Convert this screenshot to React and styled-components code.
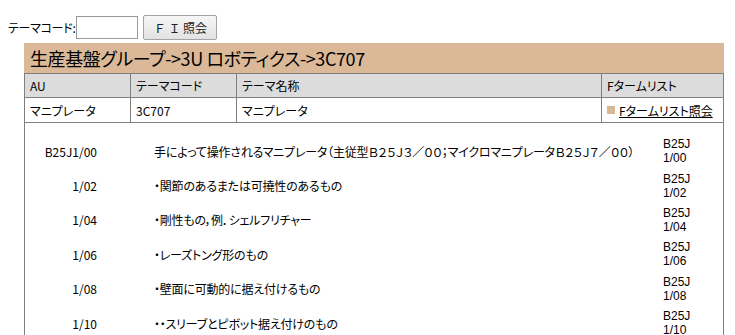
import React from 'react';
import styled, { createGlobalStyle } from 'styled-components';

const GlobalStyle = createGlobalStyle`
  body {
    margin: 8px;
    background: #ffffff;
    color: #000000;
    font-family: "Noto Sans CJK JP", "DejaVu Sans", sans-serif;
    font-size: 12px;
    font-feature-settings: "palt";
    overflow: hidden;
  }
`;

const SearchBar = styled.form`
  display: flex;
  align-items: center;
  margin-top: 7px;
  height: 25px;
`;

const Label = styled.label`
  font-size: 12px;
  letter-spacing: -0.3px;
  margin-right: 1px;
`;

const CodeInput = styled.input`
  box-sizing: border-box;
  width: 62px;
  height: 23px;
  border: 1px solid #9a9a9a;
  margin: 0;
  padding: 0 3px;
`;

const SearchButton = styled.button`
  box-sizing: border-box;
  width: 74px;
  height: 25px;
  margin: 0 0 0 5px;
  border: 1px solid #a3a3a3;
  border-radius: 2px;
  background: linear-gradient(#f6f6f6, #e2e2e2);
  font-family: inherit;
  font-size: 12px;
  color: #222;
  padding: 0;
`;

const Panel = styled.section`
  width: 700px;
  margin: 3px 0 0 16px;
`;

const Title = styled.h1`
  margin: 0;
  height: 30px;
  line-height: 30px;
  padding-left: 6px;
  background: #dbb998;
  font-size: 18px;
  font-weight: normal;
  letter-spacing: -0.4px;
  white-space: nowrap;
`;

const InfoGrid = styled.div`
  display: grid;
  grid-template-columns: 105px 106px 365px 1fr;
  border-left: 1px solid #7f7f7f;
  border-right: 1px solid #7f7f7f;
`;

const Cell = styled.div`
  box-sizing: border-box;
  height: ${(p) => (p.$head ? 24 : 25)}px;
  display: flex;
  align-items: center;
  padding-left: 5px;
  background: ${(p) => (p.$head ? '#dcdcdc' : '#ffffff')};
  border-top: 1px solid #7f7f7f;
  border-left: ${(p) => (p.$first ? 'none' : '1px solid #7f7f7f')};
  white-space: nowrap;
`;

const Square = styled.span`
  display: inline-block;
  width: 8px;
  height: 8px;
  background: #d9b896;
  margin-right: 4px;
`;

const Link = styled.a`
  color: #000;
  text-decoration: underline;
`;

const ListBox = styled.div`
  border-top: 1px solid #7f7f7f;
  border-left: 1px solid #7f7f7f;
  border-right: 1px solid #7f7f7f;
  padding-top: 11px;
  height: 400px;
`;

const Row = styled.div`
  display: grid;
  grid-template-columns: 72px 57px 509px 1fr;
  align-items: center;
  padding: 3.2px 0;
`;

const Code = styled.div`
  text-align: right;
`;

const Desc = styled.div`
  grid-column: 3;
  white-space: nowrap;
  letter-spacing: -0.2px;
`;

const Ref = styled.div`
  font-family: "Liberation Sans", Arial, sans-serif;
  line-height: 14px;
`;

const rows = [
  ['B25J1/00', '手によって操作されるマニプレータ（主従型Ｂ２５Ｊ３／００；マイクロマニプレータＢ２５Ｊ７／００）', '1/00'],
  ['1/02', '・関節のあるまたは可撓性のあるもの', '1/02'],
  ['1/04', '・剛性もの，例．シェルフリチャー', '1/04'],
  ['1/06', '・レーズトング形のもの', '1/06'],
  ['1/08', '・壁面に可動的に据え付けるもの', '1/08'],
  ['1/10', '・・スリーブとピボット据え付けのもの', '1/10'],
  ['1/12', '・支持体への取付装置をもっているもの', '1/12'],
];

export default function App() {
  return (
    <>
      <GlobalStyle />
      <SearchBar onSubmit={(e) => e.preventDefault()}>
        <Label>テーマコード:</Label>
        <CodeInput type="text" />
        <SearchButton type="submit">Ｆ Ｉ 照会</SearchButton>
      </SearchBar>
      <Panel>
        <Title>生産基盤グループ-&gt;3U ロボティクス-&gt;3C707</Title>
        <InfoGrid>
          <Cell $head $first>AU</Cell>
          <Cell $head>テーマコード</Cell>
          <Cell $head>テーマ名称</Cell>
          <Cell $head>Fタームリスト</Cell>
          <Cell $first>マニプレータ</Cell>
          <Cell>3C707</Cell>
          <Cell>マニプレータ</Cell>
          <Cell>
            <Square />
            <Link href="#">Fタームリスト照会</Link>
          </Cell>
        </InfoGrid>
        <ListBox>
          {rows.map(([code, desc, ref]) => (
            <Row key={code}>
              <Code>{code}</Code>
              <Desc>{desc}</Desc>
              <Ref>
                B25J
                <br />
                {ref}
              </Ref>
            </Row>
          ))}
        </ListBox>
      </Panel>
    </>
  );
}
